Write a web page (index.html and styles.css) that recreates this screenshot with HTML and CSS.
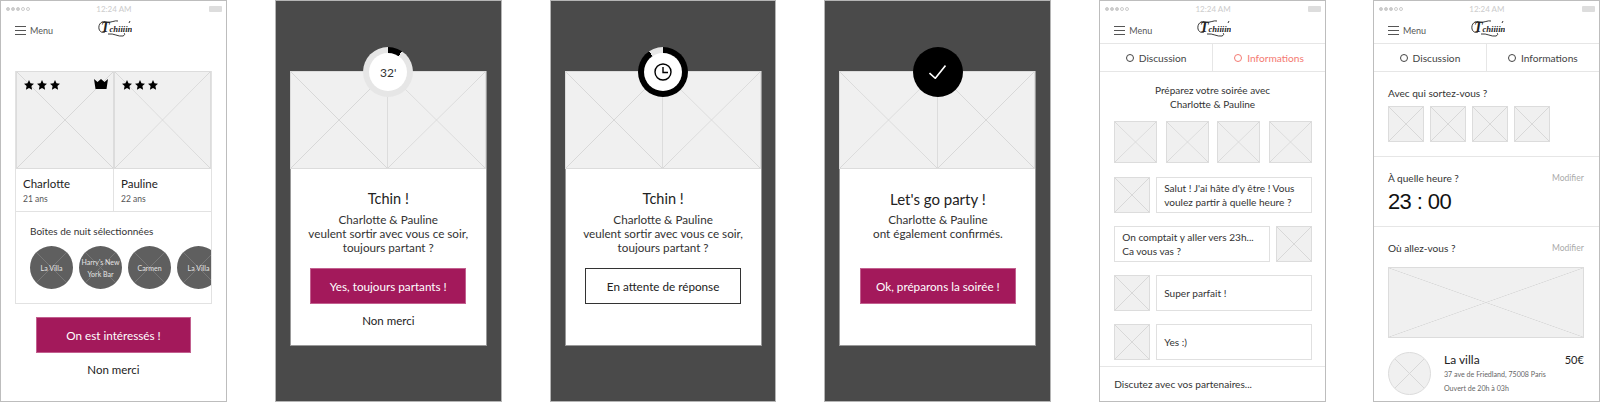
FILE: index.html
```html
<!DOCTYPE html>
<html lang="en">
<head>
    <meta charset="UTF-8">
    <meta name="viewport" content="width=device-width, initial-scale=1.0">
    <title>Tchiiiin wireframes</title>
    <link rel="stylesheet" href="styles.css">
</head>
<body>
    <!-- profile screen -->
    <div class="phone">
        <div class="status">
            <div class="dots"><i class="on"></i><i class="on"></i><i class="on"></i><i></i><i></i></div>
            <span class="time">12:24 AM</span>
            <div class="battery"></div>
        </div>
        <div class="header">
            <svg class="burger" viewBox="0 0 11 9"><path d="M0 .5H11M0 4.500H11M0 8.500H11"/></svg>
            <span class="menu">Menu</span>
            <svg class="logo" viewBox="0 0 34 19"><path class="swoosh" d="M9 2C4 0 0 4 1 9C2 12 4 13 7 12M9 2C13 3 17 0 20 1M10 14C16 13 20 17 25 16C27 15 27 14 26 13M31 3L32 1"/><text x="3" y="12"><tspan class="cap">T</tspan>chiiiin</text></svg>
        </div>
        <div class="card">
            <div class="pics">
                <div class="ph pic">
                    <div class="stars">
                        <svg viewBox="0 0 10 10"><path d="M5 0L6.500 3.300L10 3.700L7.400 6.100L8.100 9.700L5 7.900L1.900 9.700L2.600 6.100L0 3.700L3.500 3.300Z"/></svg>
                        <svg viewBox="0 0 10 10"><path d="M5 0L6.500 3.300L10 3.700L7.400 6.100L8.100 9.700L5 7.900L1.900 9.700L2.600 6.100L0 3.700L3.500 3.300Z"/></svg>
                        <svg viewBox="0 0 10 10"><path d="M5 0L6.500 3.300L10 3.700L7.400 6.100L8.100 9.700L5 7.900L1.900 9.700L2.600 6.100L0 3.700L3.500 3.300Z"/></svg>
                    </div>
                    <svg class="crown" viewBox="0 0 14 10"><path d="M0 0L3.500 3L7 0L10.500 3L14 0L12.500 10H1.500Z"/></svg>
                </div>
                <div class="ph pic">
                    <div class="stars">
                        <svg viewBox="0 0 10 10"><path d="M5 0L6.500 3.300L10 3.700L7.400 6.100L8.100 9.700L5 7.900L1.900 9.700L2.600 6.100L0 3.700L3.500 3.300Z"/></svg>
                        <svg viewBox="0 0 10 10"><path d="M5 0L6.500 3.300L10 3.700L7.400 6.100L8.100 9.700L5 7.900L1.900 9.700L2.600 6.100L0 3.700L3.500 3.300Z"/></svg>
                        <svg viewBox="0 0 10 10"><path d="M5 0L6.500 3.300L10 3.700L7.400 6.100L8.100 9.700L5 7.900L1.900 9.700L2.600 6.100L0 3.700L3.500 3.300Z"/></svg>
                    </div>
                </div>
            </div>
            <div class="people">
                <div class="person"><div class="name">Charlotte</div><div class="age">21 ans</div></div>
                <div class="person"><div class="name">Pauline</div><div class="age">22 ans</div></div>
            </div>
            <div class="clubs">
                <div class="clubs-title">Boîtes de nuit sélectionnées</div>
                <div class="club-row">
                    <div class="club">La Villa</div>
                    <div class="club">Harry's New York Bar</div>
                    <div class="club">Carmen</div>
                    <div class="club">La Villa</div>
                </div>
            </div>
        </div>
        <button class="btn wide">On est intéressés !</button>
        <div class="no">Non merci</div>
    </div>

    <!-- popup, timer running -->
    <div class="phone dark">
        <div class="modal">
            <div class="ring ring-start"><div class="ring-in">32'</div></div>
            <div class="pics"><div class="ph pic"></div><div class="ph pic"></div></div>
            <h2>Tchin !</h2>
            <p>Charlotte &amp; Pauline<br>veulent sortir avec vous ce soir,<br>toujours partant ?</p>
            <button class="btn">Yes, toujours partants !</button>
            <div class="no small">Non merci</div>
        </div>
    </div>

    <!-- popup, waiting -->
    <div class="phone dark">
        <div class="modal">
            <div class="ring ring-wait">
                <div class="ring-in">
                    <svg class="clock" viewBox="0 0 18 18"><circle cx="9" cy="9" r="8"/><path d="M9 4V9.500H14"/></svg>
                </div>
            </div>
            <div class="pics"><div class="ph pic"></div><div class="ph pic"></div></div>
            <h2>Tchin !</h2>
            <p>Charlotte &amp; Pauline<br>veulent sortir avec vous ce soir,<br>toujours partant ?</p>
            <button class="btn outline">En attente de réponse</button>
        </div>
    </div>

    <!-- popup, confirmed -->
    <div class="phone dark">
        <div class="modal">
            <div class="ring ring-done">
                <svg class="check" viewBox="0 0 17 14"><path d="M.5 8L6.300 13.300L16.500 .5"/></svg>
            </div>
            <div class="pics"><div class="ph pic"></div><div class="ph pic"></div></div>
            <h2 class="party">Let's go party !</h2>
            <p>Charlotte &amp; Pauline<br>ont également confirmés.</p>
            <button class="btn">Ok, préparons la soirée !</button>
        </div>
    </div>

    <!-- chat -->
    <div class="phone">
        <div class="status">
            <div class="dots"><i class="on"></i><i class="on"></i><i class="on"></i><i></i><i></i></div>
            <span class="time">12:24 AM</span>
            <div class="battery"></div>
        </div>
        <div class="header">
            <svg class="burger" viewBox="0 0 11 9"><path d="M0 .5H11M0 4.500H11M0 8.500H11"/></svg>
            <span class="menu">Menu</span>
            <svg class="logo" viewBox="0 0 34 19"><path class="swoosh" d="M9 2C4 0 0 4 1 9C2 12 4 13 7 12M9 2C13 3 17 0 20 1M10 14C16 13 20 17 25 16C27 15 27 14 26 13M31 3L32 1"/><text x="3" y="12"><tspan class="cap">T</tspan>chiiiin</text></svg>
        </div>
        <div class="tabs">
            <div class="tab"><i></i>Discussion</div>
            <div class="tab active"><i></i>Informations</div>
        </div>
        <div class="chat-intro">Préparez votre soirée avec<br>Charlotte &amp; Pauline</div>
        <div class="thumbs">
            <div class="ph"></div><div class="ph"></div><div class="ph"></div><div class="ph"></div>
        </div>
        <div class="messages">
            <div class="msg"><div class="ph avatar"></div><div class="bubble">Salut ! J'ai hâte d'y être ! Vous voulez partir à quelle heure ?</div></div>
            <div class="msg"><div class="bubble">On comptait y aller vers 23h...<br>Ca vous vas ?</div><div class="ph avatar"></div></div>
            <div class="msg"><div class="ph avatar"></div><div class="bubble">Super parfait !</div></div>
            <div class="msg"><div class="ph avatar"></div><div class="bubble">Yes :)</div></div>
        </div>
        <div class="chat-input">Discutez avec vos partenaires...</div>
    </div>

    <!-- informations -->
    <div class="phone">
        <div class="status">
            <div class="dots"><i class="on"></i><i class="on"></i><i class="on"></i><i></i><i></i></div>
            <span class="time">12:24 AM</span>
            <div class="battery"></div>
        </div>
        <div class="header">
            <svg class="burger" viewBox="0 0 11 9"><path d="M0 .5H11M0 4.500H11M0 8.500H11"/></svg>
            <span class="menu">Menu</span>
            <svg class="logo" viewBox="0 0 34 19"><path class="swoosh" d="M9 2C4 0 0 4 1 9C2 12 4 13 7 12M9 2C13 3 17 0 20 1M10 14C16 13 20 17 25 16C27 15 27 14 26 13M31 3L32 1"/><text x="3" y="12"><tspan class="cap">T</tspan>chiiiin</text></svg>
        </div>
        <div class="tabs">
            <div class="tab"><i></i>Discussion</div>
            <div class="tab"><i></i>Informations</div>
        </div>
        <div class="info who">
            <div class="info-title">Avec qui sortez-vous ?</div>
            <div class="who-row">
                <div class="ph"></div><div class="ph"></div><div class="ph"></div><div class="ph"></div>
            </div>
        </div>
        <div class="info when">
            <div class="info-title">À quelle heure ?<span class="edit">Modifier</span></div>
            <div class="hour">23 : 00</div>
        </div>
        <div class="info where">
            <div class="info-title">Où allez-vous ?<span class="edit">Modifier</span></div>
            <div class="ph venue-pic"></div>
            <div class="venue">
                <div class="ph venue-logo"></div>
                <div class="venue-text">
                    <div class="venue-name">La villa<span>50€</span></div>
                    <div class="venue-line">37 ave de Friedland, 75008 Paris</div>
                    <div class="venue-line">Ouvert de 20h à 03h</div>
                </div>
            </div>
        </div>
    </div>
</body>
</html>
```

FILE: styles.css
```css
* {
    box-sizing: border-box;
}
body {
    margin: 0;
    width: 1600px;
    height: 402px;
    overflow: hidden;
    display: flex;
    gap: 48px;
    background-color: white;
    font-family: Lato, "Open Sans", sans-serif;
    color: #333;
}
.phone {
    flex: none;
    width: 226.8px;
    height: 402px;
    border: 1px solid #bdbdbd;
    background-color: white;
    overflow: hidden;
}
.phone:last-child {
    margin-left: -1px;
}
.phone.dark {
    background-color: #4a4a4a;
    border-color: #b5b5b5;
}

/* status bar and header */
.status {
    height: 15px;
    padding: 0 4px 0 5px;
    display: grid;
    grid-template-columns: 1fr auto 1fr;
    align-items: center;
}
.dots {
    display: flex;
    gap: 1px;
}
.dots i {
    width: 4px;
    height: 4px;
    border-radius: 50%;
    border: 1px solid #ccc;
}
.dots i.on {
    background-color: #ccc;
}
.time {
    font-size: 8px;
    color: #ccc;
}
.battery {
    justify-self: end;
    width: 13px;
    height: 6px;
    border-radius: 1px;
    background-color: #ddd;
}
.header {
    height: 27px;
    padding-left: 14px;
    display: flex;
    align-items: center;
}
.burger {
    width: 11px;
    height: 9px;
    margin-top: 1px;
}
.burger path {
    fill: none;
    stroke: #555;
    stroke-width: 1;
}
.menu {
    margin-left: 4px;
    font-size: 9px;
    color: #555;
    margin-top: 1px;
}
.logo {
    width: 34px;
    height: 19px;
    margin-left: 45px;
}
.logo text {
    font-family: "Liberation Serif", serif;
    font-style: italic;
    font-weight: 700;
    font-size: 8.500px;
    fill: #222;
}
.logo .cap {
    font-size: 14px;
}
.swoosh {
    fill: none;
    stroke: #222;
    stroke-width: .9;
}

/* placeholder box with a cross */
.ph {
    background-color: #f0f0f0;
    background-image:
        linear-gradient(to top right, transparent calc(50% - .6px), #d8d8d8 50%, transparent calc(50% + .6px)),
        linear-gradient(to bottom right, transparent calc(50% - .6px), #d8d8d8 50%, transparent calc(50% + .6px));
    border: 1px solid #dcdcdc;
}
.pics {
    display: flex;
}
.pic {
    position: relative;
    width: 98.500px;
    height: 98px;
}

/* first screen */
.card {
    width: 197px;
    margin: 28px 0 0 14px;
    border: 1px solid #e2e2e2;
    border-top: none;
}
.stars {
    position: absolute;
    top: 8px;
    left: 7px;
    display: flex;
    gap: 3px;
}
.stars svg {
    width: 10px;
    height: 10px;
}
.crown {
    position: absolute;
    top: 7px;
    right: 5px;
    width: 14px;
    height: 10px;
}
.people {
    display: flex;
    height: 43px;
    border-bottom: 1px solid #e2e2e2;
}
.person {
    flex: 1;
    padding: 7px 0 0 7px;
}
.person + .person {
    border-left: 1px solid #e2e2e2;
}
.name {
    font-size: 11.500px;
    line-height: 16px;
    color: #222;
}
.age {
    font-size: 8.500px;
    line-height: 13px;
    margin-top: 1px;
    color: #555;
}
.clubs {
    height: 91px;
    padding: 12px 0 0 14px;
    overflow: hidden;
}
.clubs-title {
    font-size: 10px;
    line-height: 14px;
}
.club-row {
    display: flex;
    gap: 6px;
    margin-top: 8px;
}
.club {
    flex: none;
    width: 43px;
    height: 43px;
    border-radius: 50%;
    display: flex;
    align-items: center;
    justify-content: center;
    text-align: center;
    background-color: #5f5f5f;
    background-image:
        linear-gradient(45deg, transparent calc(50% - .5px), #777 50%, transparent calc(50% + .5px)),
        linear-gradient(-45deg, transparent calc(50% - .5px), #777 50%, transparent calc(50% + .5px));
    font-size: 7px;
    line-height: 12px;
    color: #e4e4e4;
}

/* buttons */
.btn {
    display: block;
    width: 156px;
    height: 36px;
    margin: 13px auto 0;
    padding: 0;
    border: 1px solid #c2608f;
    background-color: #a3195b;
    color: white;
    font-family: inherit;
    font-size: 11.700px;
}
.btn.wide {
    width: 155px;
    margin-left: 35px;
}
.btn.outline {
    background-color: white;
    border-color: #333;
    color: #222;
}
.no {
    margin-top: 8px;
    text-align: center;
    font-size: 11.500px;
    line-height: 18px;
    color: #222;
}

/* popups */
.modal {
    position: relative;
    width: 197px;
    height: 275px;
    margin: 70px 0 0 14px;
    border: 1px solid #999;
    border-top: none;
    background-color: white;
    text-align: center;
}
.modal .pics {
    margin-left: -1px;
}
.modal .pic {
    width: 99px;
}
.modal .pic + .pic {
    margin-left: -1px;
}
.modal h2 {
    margin: 21px 0 0;
    font-size: 14.500px;
    line-height: 18px;
    font-weight: 400;
    color: #222;
}
.modal h2.party {
    font-size: 15px;
}
.modal p {
    height: 42px;
    margin: 4px 0 0;
    font-size: 11.700px;
    line-height: 14px;
}
.modal .btn {
    margin-top: 14px;
}
.ring {
    position: absolute;
    top: -24px;
    left: 50%;
    margin-left: -25px;
    width: 50px;
    height: 50px;
    padding: 6px;
    border-radius: 50%;
    z-index: 1;
    display: flex;
    align-items: center;
    justify-content: center;
}
.ring-in {
    width: 38px;
    height: 38px;
    border-radius: 50%;
    background-color: white;
    display: flex;
    align-items: center;
    justify-content: center;
    font-size: 12px;
}
.ring-start {
    background: conic-gradient(#000 0 34deg, #e6e6e6 0);
}
.ring-wait {
    background: conic-gradient(#000 0 326deg, #e6e6e6 0);
}
.ring-done {
    background-color: #000;
}
.clock {
    width: 18px;
    height: 18px;
}
.clock circle, .clock path {
    fill: none;
    stroke: #000;
    stroke-width: 1.400;
}
.check {
    width: 17px;
    height: 14px;
}
.check path {
    fill: none;
    stroke: white;
    stroke-width: 1.600;
}

/* tabs */
.tabs {
    display: flex;
    height: 29px;
    border-top: 1px solid #e6e6e6;
    border-bottom: 1px solid #e6e6e6;
}
.tab {
    flex: 1;
    display: flex;
    align-items: center;
    justify-content: center;
    gap: 5px;
    font-size: 10.200px;
    color: #444;
}
.tab + .tab {
    border-left: 1px solid #e6e6e6;
}
.tab i {
    width: 8px;
    height: 8px;
    border-radius: 50%;
    border: 1px solid #444;
}
.tab.active {
    color: #f47a72;
}
.tab.active i {
    border-color: #f47a72;
}

/* chat */
.chat-intro {
    margin-top: 11px;
    text-align: center;
    font-size: 10px;
    line-height: 14px;
}
.thumbs {
    display: flex;
    justify-content: space-between;
    margin: 10px 13px 0 14px;
}
.thumbs .ph {
    width: 43px;
    height: 42px;
}
.messages {
    display: flex;
    flex-direction: column;
    gap: 13px;
    margin: 14px 13px 0 14px;
}
.msg {
    display: flex;
    gap: 6px;
    height: 36px;
}
.avatar {
    flex: none;
    width: 36px;
}
.bubble {
    flex: 1;
    display: flex;
    align-items: center;
    padding: 0 7px;
    border: 1px solid #e0e0e0;
    font-size: 10.100px;
    line-height: 14px;
}
.msg .bubble:first-child, .msg:first-child .bubble {
    display: block;
    padding-top: 3px;
}
.chat-input {
    margin-top: 6px;
    padding: 10px 14px;
    border-top: 1px solid #e6e6e6;
    font-size: 10.100px;
    line-height: 14px;
}

/* informations */
.info {
    padding: 14px 15px 0 14px;
}
.info-title {
    display: flex;
    justify-content: space-between;
    align-items: center;
    font-size: 10.100px;
    line-height: 14px;
}
.edit {
    font-size: 8.500px;
    color: #aaa;
}
.who {
    height: 85px;
    border-bottom: 1px solid #e6e6e6;
}
.who-row {
    display: flex;
    gap: 6px;
    margin-top: 6px;
}
.who-row .ph {
    width: 36px;
    height: 36px;
}
.when {
    height: 70px;
    border-bottom: 1px solid #e6e6e6;
}
.hour {
    margin-top: 4px;
    font-family: "Liberation Sans", sans-serif;
    font-size: 22px;
    line-height: 26px;
    letter-spacing: -.6px;
    color: #111;
}
.venue-pic {
    height: 71px;
    margin-top: 12px;
}
.venue {
    display: flex;
    gap: 13px;
    margin-top: 14px;
}
.venue-logo {
    flex: none;
    width: 43px;
    height: 43px;
    border-radius: 50%;
}
.venue-text {
    flex: 1;
}
.venue-name {
    display: flex;
    justify-content: space-between;
    font-size: 12px;
    line-height: 15px;
    color: #222;
}
.venue-name span {
    font-size: 11px;
}
.venue-line {
    margin-top: 1px;
    font-size: 7.100px;
    line-height: 13px;
    color: #666;
}
```
